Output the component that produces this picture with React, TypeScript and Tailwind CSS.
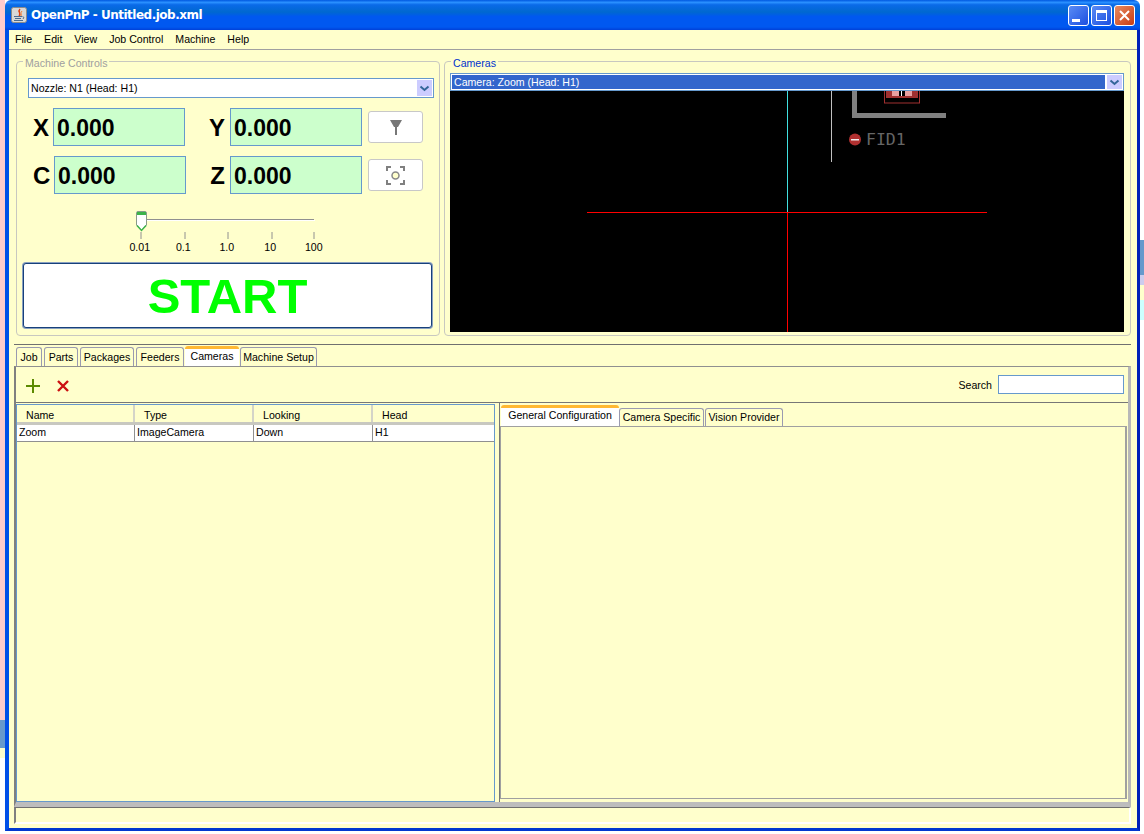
import React from 'react'

const tabs = [
  { label: 'Job', w: 'w-[26px] mr-[2px]' },
  { label: 'Parts', w: 'w-[34px] mr-[2px]' },
  { label: 'Packages', w: 'w-[54px] mr-[2px]' },
  { label: 'Feeders', w: 'w-[48px] mr-[1px]' },
  { label: 'Cameras', w: 'w-[54px] mr-[1px]', active: true },
  { label: 'Machine Setup', w: 'w-[77px]' },
]

const columns = [
  { name: 'Name', value: 'Zoom', w: 'w-[118px]' },
  { name: 'Type', value: 'ImageCamera', w: 'w-[119px]' },
  { name: 'Looking', value: 'Down', w: 'w-[119px]' },
  { name: 'Head', value: 'H1', w: 'flex-1' },
]

const ticks = ['0.01', '0.1', '1.0', '10', '100']

function Chevron() {
  return (
    <div className="flex w-[15px] h-full items-center justify-center bg-[#ccccff]">
      <svg width="11" height="7" viewBox="0 0 11 7">
        <path d="M1.5 1.5 L5.5 5 L9.5 1.5" fill="none" stroke="#336699" strokeWidth="2" />
      </svg>
    </div>
  )
}

function Field({ value, w = 'w-[132px]' }: { value: string; w?: string }) {
  return (
    <div className={`${w} h-[38px] flex items-center pl-[3px] pt-[2px] bg-[#ccffcc] border border-[#6699cc] text-[23px] font-bold text-black`}>
      {value}
    </div>
  )
}

function Panel({ title, titleColor, w, children }: { title: string; titleColor: string; w: string; children: React.ReactNode }) {
  return (
    <div className={`${w} h-full border border-[#c8c8c0] rounded-[4px] p-[1px]`}>
      <div className={`w-fit -mt-[7px] ml-[5px] h-[14px] px-[2px] bg-[#ffffcc] leading-[14px] ${titleColor}`}>{title}</div>
      {children}
    </div>
  )
}

function CameraView() {
  return (
    <svg className="block" width="674" height="241" viewBox="450 91 674 241">
      <rect x="450" y="91" width="674" height="241" fill="#000" />
      <rect x="852" y="91" width="5" height="27" fill="#808080" />
      <rect x="853" y="113" width="93" height="5" fill="#808080" />
      <rect x="884.5" y="88" width="35" height="15" fill="none" stroke="#a03030" />
      <rect x="886" y="91" width="32" height="7" fill="#a03030" />
      <rect x="892" y="91" width="7" height="5" fill="#e8a0a0" />
      <rect x="905" y="91" width="7" height="5" fill="#e8a0a0" />
      <rect x="899" y="91" width="6" height="5" fill="#000" />
      <rect x="901" y="91" width="1" height="5" fill="#fff" />
      <circle cx="855" cy="139.5" r="6" fill="#b03030" />
      <rect x="851" y="139" width="8" height="1.5" fill="#eee" />
      <text x="866" y="145" fontFamily="'DejaVu Sans Mono', monospace" fontSize="16.5" fill="#666">FID1</text>
      <rect x="831" y="91" width="1" height="71" fill="#c0c0c0" />
      <rect x="787" y="91" width="1" height="121" fill="#40e0e0" />
      <rect x="787" y="212" width="1" height="120" fill="#ff0000" />
      <rect x="587" y="212" width="400" height="1" fill="#ff0000" />
    </svg>
  )
}

function JavaIcon() {
  return (
    <svg width="16" height="16" viewBox="0 0 16 16">
      <rect x="0.5" y="0.5" width="15" height="15" rx="2" fill="#d8d8d8" stroke="#8a8a8a" />
      <path d="M9 2 C6 5 11 6 8 9" fill="none" stroke="#e04010" strokeWidth="1.5" />
      <path d="M11 4 C9 6 11 7 10 9" fill="none" stroke="#f08030" />
      <path d="M3 9.5 H11 M4 11.5 H10 M3 13.5 H12" stroke="#4a6a90" strokeWidth="1.2" />
      <path d="M11.5 9.5 Q14 10 12 12" fill="none" stroke="#4a6a90" />
    </svg>
  )
}

function WinButton({ close, children }: { close?: boolean; children: React.ReactNode }) {
  return (
    <div
      className={`w-[21px] h-[21px] flex items-center justify-center rounded-[3px] border border-white ${
        close ? 'bg-[linear-gradient(135deg,#e88a60,#c83c14)]' : 'bg-[linear-gradient(135deg,#5a8cf5,#1c4fe0)]'
      }`}
    >
      {children}
    </div>
  )
}

export default function App() {
  return (
    <div className="w-[1144px] h-[834px] flex bg-white overflow-hidden font-['Liberation_Sans',Arial,sans-serif] text-[10.6px] text-black">
      {/* desktop behind the window, left edge */}
      <div className="w-[5px] h-full flex flex-col shrink-0 overflow-hidden">
        <div className="h-[720px] bg-[#ffcccc]" />
        <div className="h-[28px] bg-[#6699cc]" />
        <div className="h-[10px] bg-[#ffffcc]" />
        <div className="h-[76px] bg-white" />
      </div>

      {/* window */}
      <div className="w-[1135px] h-[831px] flex flex-col shrink-0">
        <div className="h-[30px] flex items-center pl-[6px] pr-[5px] rounded-t-[6px] bg-[linear-gradient(180deg,#0058e0_0,#2a90ff_8%,#0a6ae8_16%,#0068d0_40%,#0058f0_55%,#0058f0_90%,#0040d8_100%)]">
          <JavaIcon />
          <div className="ml-[4px] text-[12px] font-bold text-white font-['DejaVu_Sans',sans-serif] tracking-[-0.5px]">OpenPnP - Untitled.job.xml</div>
          <div className="ml-auto flex gap-[2px]">
            <WinButton>
              <div className="w-[8px] h-[3px] bg-white mt-[10px] -ml-[5px]" />
            </WinButton>
            <WinButton>
              <div className="w-[11px] h-[11px] border border-white border-t-[3px]" />
            </WinButton>
            <WinButton close>
              <svg width="13" height="13" viewBox="0 0 13 13">
                <path d="M2 2 L11 11 M11 2 L2 11" stroke="#fff" strokeWidth="2" />
              </svg>
            </WinButton>
          </div>
        </div>

        <div className="h-[801px] flex flex-col bg-[#ffffcc] border-l-4 border-l-[#0050e8] border-r-[3px] border-r-[#0020b8] border-b-[3px] border-b-[#0038d0]">
          {/* menu bar */}
          <div className="h-[20px] shrink-0 flex items-center gap-[12px] pl-[6px] border-b border-[#a0a0a0]">
            <span>File</span>
            <span>Edit</span>
            <span>View</span>
            <span>Job Control</span>
            <span>Machine</span>
            <span>Help</span>
          </div>

          {/* machine controls and cameras */}
          <div className="h-[275px] shrink-0 mt-[11px] ml-[7px] flex gap-[4px]">
            <Panel title="Machine Controls" titleColor="text-[#a0a0a0]" w="w-[424px]">
              <div className="ml-[10px] mt-[8px] w-[406px] h-[20px] flex items-center justify-between bg-white border border-[#6699cc] pl-[2px] pr-[1px] py-[1px]">
                <span className="pt-[1px]">Nozzle: N1 (Head: H1)</span>
                <Chevron />
              </div>

              <div className="flex items-start ml-[15px] mt-[10px]">
                <div className="w-[20px] h-[38px] pt-[1px] flex items-center text-[24px] font-bold">X</div>
                <Field value="0.000" />
                <div className="w-[45px] h-[38px] pt-[1px] flex items-center justify-end pr-[5px] text-[24px] font-bold">Y</div>
                <Field value="0.000" />
                <div className="ml-[6px] mt-[3px] w-[55px] h-[32px] flex items-center justify-center bg-white border border-[#c8c8c8] rounded-[3px]">
                  <svg width="12" height="15" viewBox="0 0 12 15">
                    <path d="M0 0 H12 L8 7 H7 V15 H5 V7 H4 Z" fill="#777" />
                  </svg>
                </div>
              </div>

              <div className="flex items-start ml-[15px] mt-[10px]">
                <div className="w-[21px] h-[38px] pt-[1px] flex items-center text-[24px] font-bold">C</div>
                <Field value="0.000" />
                <div className="w-[44px] h-[38px] pt-[1px] flex items-center justify-end pr-[5px] text-[24px] font-bold">Z</div>
                <Field value="0.000" />
                <div className="ml-[6px] mt-[3px] w-[55px] h-[32px] flex items-center justify-center bg-white border border-[#c8c8c8] rounded-[3px]">
                  <svg width="19" height="19" viewBox="0 0 19 19">
                    <path d="M1 5 V1 H5 M14 1 H18 V5 M18 14 V18 H14 M5 18 H1 V14" fill="none" stroke="#808080" strokeWidth="2" />
                    <circle cx="9.5" cy="9.5" r="3.5" fill="#ffffcc" stroke="#888" strokeWidth="1.5" />
                  </svg>
                </div>
              </div>

              {/* jog increment slider */}
              <svg className="block ml-[112px] mt-[17px]" width="200" height="29" viewBox="130 211 200 29">
                <rect x="147" y="219" width="167" height="1" fill="#909090" />
                <rect x="147" y="220" width="168" height="1" fill="#fff" />
                <path d="M141 232 V239 M185 232 V239 M228 232 V239 M272 232 V239 M314 232 V239" stroke="#909090" />
                <path d="M136.5 212.5 Q136.5 211.5 138 211.5 H145 Q146.5 211.5 146.5 213 V225 L141.5 230.5 L136.5 225 Z" fill="#fff" stroke="#8a9a8a" />
                <rect x="137" y="212" width="9" height="3" fill="#3cb44a" />
                <path d="M137 225.5 L141.5 230.5 L146 225.5" fill="none" stroke="#3cb44a" strokeWidth="1.5" />
              </svg>
              <div className="flex ml-[100px] h-[14px] leading-[14px]">
                {ticks.map(t => (
                  <div key={t} className="w-[43.5px] text-center">{t}</div>
                ))}
              </div>

              <div className="ml-[5px] mt-[9px] pt-[2px] w-[409px] h-[65px] flex items-center justify-center bg-white border border-[#17417a] ring-1 ring-[#8aa0c0] rounded-[3px] text-[49px] font-bold text-[#00ff00]">
                START
              </div>
            </Panel>

            <Panel title="Cameras" titleColor="text-[#0033cc]" w="w-[687px]">
              <div className="ml-[4px] mt-[3px] w-[674px] h-[18px] flex items-center gap-[2px] bg-white border border-[#6699cc] p-[1px]">
                <div className="flex-1 h-full flex items-center pl-[2px] pt-[1px] bg-[#3366cc] text-white">Camera: Zoom (Head: H1)</div>
                <Chevron />
              </div>
              <div className="ml-[4px]">
                <CameraView />
              </div>
            </Panel>
          </div>

          <div className="h-px w-[1117px] shrink-0 ml-[5px] mt-[8px] bg-[#707070]" />

          {/* main tabs */}
          <div className="h-[21px] shrink-0 ml-[7px] flex items-end">
            {tabs.map(t =>
              t.active ? (
                <div key={t.label} className={`${t.w} h-[20px] pb-[1px] flex items-center justify-center bg-white border-t-[3px] border-[#ffb833] rounded-t-[3px]`}>
                  {t.label}
                </div>
              ) : (
                <div key={t.label} className={`${t.w} h-[19px] pt-[2px] flex items-center justify-center border border-b-0 border-[#9a9ab0] rounded-t-[3px]`}>
                  {t.label}
                </div>
              )
            )}
          </div>

          {/* tab body */}
          <div className="w-[1117px] h-[441px] shrink-0 ml-[5px] flex flex-col border-t border-[#909090] border-l-2 border-l-[#808080] border-r-[3px] border-r-[#b8b8b8] border-b-[5px] border-b-[#bdbdbd]">
            <div className="h-[36px] shrink-0 flex items-center pt-[2px] pl-[9px] pr-[4px] border-b border-[#777]">
              <svg width="16" height="16" viewBox="0 0 16 16">
                <path d="M8 1 V15 M1 8 H15" stroke="#5c8a00" strokeWidth="2" />
              </svg>
              <svg className="ml-[15px]" width="14" height="14" viewBox="0 0 14 14">
                <path d="M2 2 L12 12 M12 2 L2 12" stroke="#cc1111" strokeWidth="2.4" />
              </svg>
              <span className="ml-auto">Search</span>
              <div className="ml-[6px] -mt-[2px] w-[126px] h-[19px] bg-white border border-[#6699cc]" />
            </div>

            <div className="flex-1 min-h-0 flex">
              {/* camera table */}
              <div className="w-[479px] mt-[1px] shrink-0 border border-[#6699cc]">
                <div className="h-[20px] flex border-b-[3px] border-[#c8c8c0]">
                  {columns.map(c => (
                    <div key={c.name} className={`${c.w} flex items-center pl-[9px] pt-[4px] border-r-2 border-[#d4d4c8] last:border-r-0`}>{c.name}</div>
                  ))}
                </div>
                <div className="h-[17px] flex bg-white border-b border-[#909090]">
                  {columns.map(c => (
                    <div key={c.name} className={`${c.w} flex items-center pl-[2px] border-r border-[#909090] last:border-r-0`}>{c.value}</div>
                  ))}
                </div>
              </div>

              {/* camera detail */}
              <div className="flex-1 ml-[4px] flex flex-col border-l border-[#777] pl-[1px] pr-[1px] pb-[3px]">
                <div className="h-[23px] shrink-0 flex items-end">
                  <div className="w-[118px] h-[21px] pb-[3px] flex items-center justify-center bg-white border-t-[3px] border-[#ffb833] rounded-t-[3px]">General Configuration</div>
                  <div className="w-[85px] h-[18px] flex items-center justify-center border border-b-0 border-[#9a9ab0] rounded-t-[3px]">Camera Specific</div>
                  <div className="w-[78px] h-[18px] ml-[1px] flex items-center justify-center border border-b-0 border-[#9a9ab0] rounded-t-[3px]">Vision Provider</div>
                </div>
                <div className="flex-1 -ml-[1px] border border-[#a0a0a0] border-r-2" />
              </div>
            </div>
          </div>

          {/* status bar */}
          <div className="h-[17px] w-[1117px] shrink-0 ml-[5px] border-t border-[#707070] border-l-2 border-l-[#808080] border-b-2 border-b-white border-r-2 border-r-white" />
        </div>
      </div>

      {/* desktop behind the window, right edge */}
      <div className="w-[4px] h-full flex flex-col shrink-0 overflow-hidden">
        <div className="h-[240px] bg-white" />
        <div className="h-[35px] bg-[#6699cc]" />
        <div className="h-[10px] bg-[#ccccee]" />
        <div className="h-[15px] bg-[#ffffcc]" />
        <div className="h-[20px] bg-[#ccffff]" />
      </div>
    </div>
  )
}
